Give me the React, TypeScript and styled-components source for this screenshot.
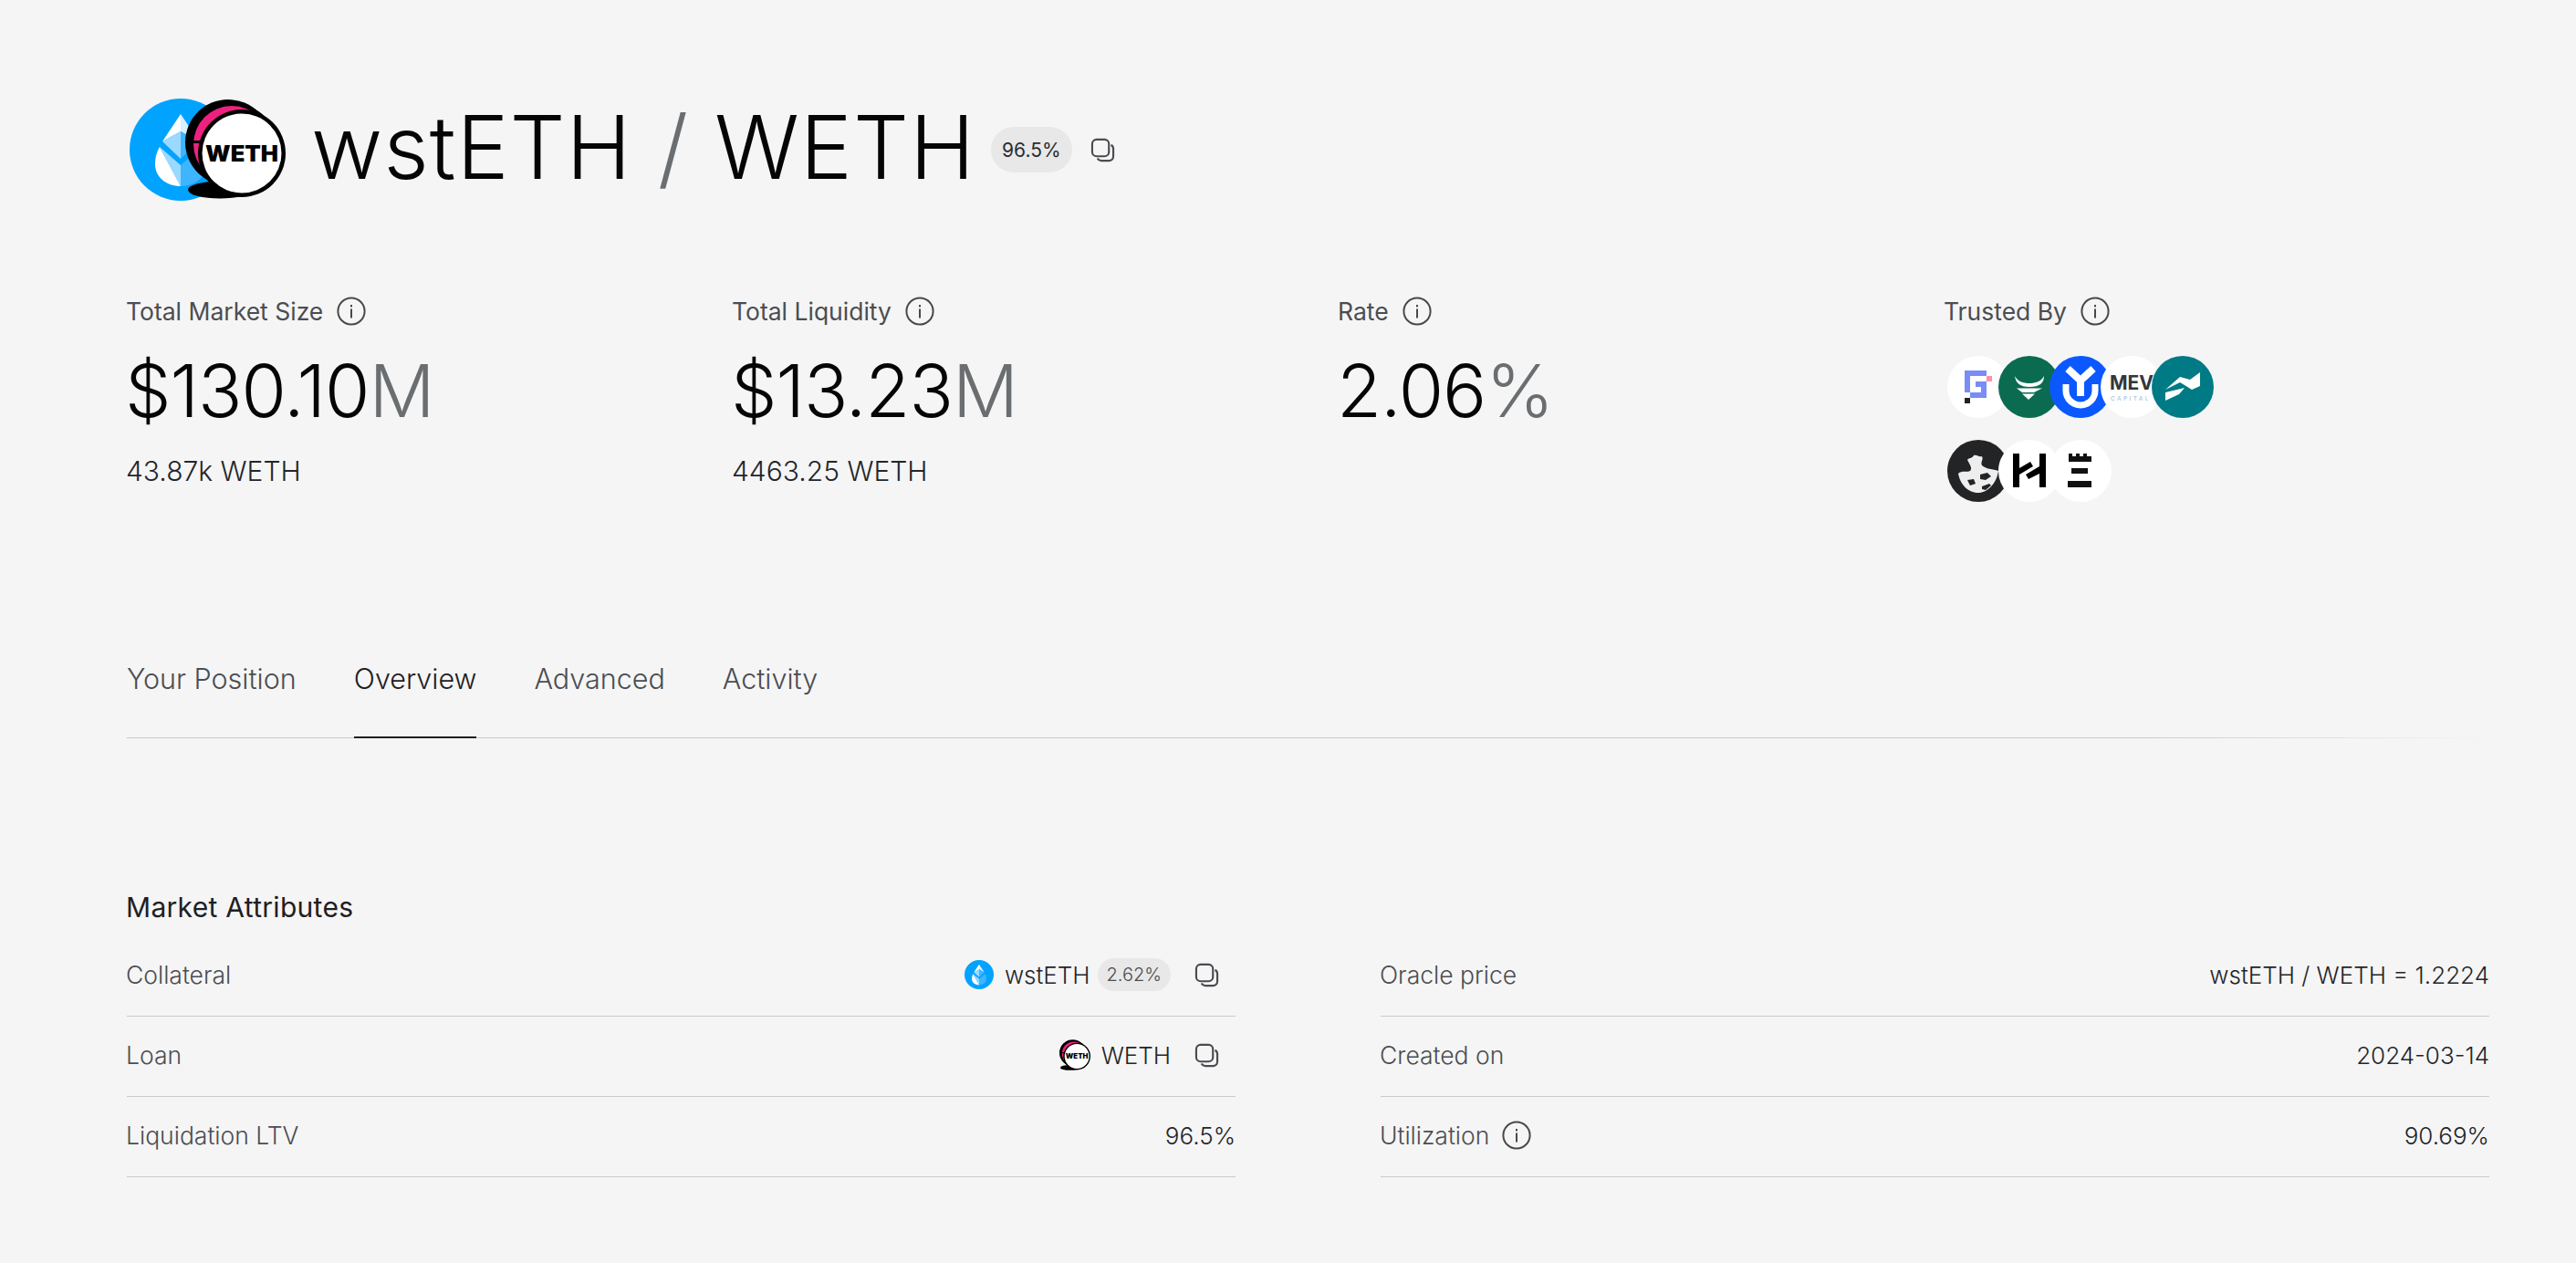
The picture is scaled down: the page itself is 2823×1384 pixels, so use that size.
import React from 'react';
import styled, { createGlobalStyle } from 'styled-components';

const GlobalStyle = createGlobalStyle`
  html, body {
    margin: 0;
    padding: 0;
    background: #f5f5f5;
  }
  body {
    font-family: Inter, "Liberation Sans", sans-serif;
    color: #151618;
  }
`;

const Page = styled.main`
  box-sizing: border-box;
  width: 2823px;
  height: 1384px;
  padding: 107px 95px 0 139px;
  overflow: hidden;
`;

const TitleRow = styled.header`
  display: flex;
  align-items: center;
  height: 114px;
`;

const LogoPair = styled.div`
  display: flex;
  width: 172px;
  margin-left: 3px;
  margin-right: 28px;
`;

const WethOverlap = styled.div`
  margin-left: -51px;
`;

const TokenSvg = styled.svg<{ $size: number }>`
  display: block;
  flex: none;
  width: ${({ $size }) => $size}px;
  height: ${({ $size }) => $size}px;
`;

const Title = styled.h1`
  margin: 0 0 6px -1px;
  font-size: 96px;
  font-weight: 300;
  letter-spacing: 1px;
  line-height: 108px;
  color: #050505;
  white-space: nowrap;
`;

const TitleSlash = styled.span`
  color: #6b6e70;
`;

const Chip = styled.span<{ $big?: boolean }>`
  display: inline-flex;
  align-items: center;
  justify-content: center;
  box-sizing: border-box;
  height: ${({ $big }) => ($big ? '50px' : '36px')};
  padding: 0 ${({ $big }) => ($big ? '12px' : '10px')};
  border-radius: 26px;
  background: #e8e8e8;
  font-size: ${({ $big }) => ($big ? '21px' : '20px')};
  color: ${({ $big }) => ($big ? '#2a2c30' : '#4b4d52')};
`;

const TitleChip = styled(Chip)`
  margin-left: 17px;
`;

const CopyButton = styled.button<{ $size: number }>`
  display: flex;
  border: 0;
  padding: 0;
  background: none;
  color: #4a4b4f;
  svg {
    display: block;
    width: ${({ $size }) => $size}px;
    height: ${({ $size }) => $size}px;
  }
`;

const TitleCopy = styled(CopyButton)`
  margin-left: 20px;
`;

const Stats = styled.section`
  display: grid;
  grid-template-columns: repeat(4, 664px);
  margin-top: 102px;
  height: 330px;
`;

const Stat = styled.div`
  display: flex;
  flex-direction: column;
`;

const StatLabel = styled.div`
  display: flex;
  align-items: center;
  gap: 15px;
  height: 36px;
  margin-left: -1px;
  font-size: 26.5px;
  color: #4b4d52;
`;

const StatValue = styled.div`
  margin-top: 29px;
  margin-left: -2px;
  height: 80px;
  font-size: 80px;
  font-weight: 300;
  line-height: 80px;
  letter-spacing: -1px;
  color: #050505;
`;

const StatUnit = styled.span`
  color: #6b6e70;
`;

const StatSub = styled.div`
  margin-top: 30px;
  margin-left: -1px;
  font-size: 30px;
  line-height: 36px;
  font-weight: 300;
  color: #23252a;
`;

const InfoIcon = styled.svg`
  display: block;
  flex: none;
  width: 32px;
  height: 32px;
  color: #47484c;
`;

const Curators = styled.div`
  display: flex;
  flex-direction: column;
  gap: 24px;
  margin-top: 31px;
  margin-left: 3px;
`;

const CuratorRow = styled.div`
  display: flex;
`;

const Curator = styled.svg`
  display: block;
  flex: none;
  width: 68px;
  height: 68px;
  margin-right: -12px;
`;

const Tabs = styled.nav`
  display: flex;
  gap: 63px;
  margin-top: 61px;
  height: 95px;
  box-sizing: border-box;
  border-bottom: 1px solid transparent;
  border-image: linear-gradient(to right, #cacaca 85%, #f5f5f5 100%) 1;
`;

const Tab = styled.a<{ $active?: boolean }>`
  font-size: 30.5px;
  line-height: 36px;
  padding-top: 12px;
  font-weight: 300;
  color: ${({ $active }) => ($active ? '#1e2023' : '#4b4d52')};
  box-sizing: border-box;
  height: 95px;
  border-bottom: ${({ $active }) => ($active ? '2px solid #1e2023' : '0')};
`;

const Attributes = styled.section`
  margin-top: 168px;
`;

const SectionTitle = styled.h2`
  margin: 0 0 0 -1px;
  font-size: 30px;
  font-weight: 400;
  letter-spacing: 0.3px;
  line-height: 34px;
  color: #1e2023;
`;

const AttributeGrid = styled.div`
  display: grid;
  grid-template-columns: 1215px 1215px;
  column-gap: 159px;
  margin-top: 15px;
`;

const Column = styled.div`
  display: flex;
  flex-direction: column;
`;

const Row = styled.div`
  display: flex;
  align-items: center;
  justify-content: space-between;
  box-sizing: border-box;
  height: 88px;
  padding-bottom: 3px;
  border-bottom: 1px solid #cacaca;
  font-size: 26px;
  font-weight: 350;
`;

const RowLabel = styled.span`
  display: flex;
  align-items: center;
  gap: 14px;
  margin-left: -1px;
  font-size: 26.5px;
  color: #4b4d52;
`;

const RowValue = styled.span`
  display: flex;
  align-items: center;
  color: #23252a;
`;

const TokenName = styled.span`
  margin-left: 12px;
`;

const RowChip = styled(Chip)`
  margin-left: 8px;
`;

const RowCopy = styled(CopyButton)`
  margin-left: 26px;
  margin-right: 18px;
`;

const Info = () => (
  <InfoIcon viewBox="0 0 32 32" fill="none">
    <circle cx="16" cy="16" r="14.6" stroke="currentColor" strokeWidth="2" />
    <rect x="15" y="13.5" width="2" height="10" fill="currentColor" />
    <rect x="15" y="9" width="2" height="2.4" fill="currentColor" />
  </InfoIcon>
);

const CopySvg = () => (
  <svg viewBox="0 0 28 28" fill="none" stroke="currentColor" strokeWidth="2.2">
    <rect x="2" y="2" width="19" height="19" rx="5" />
    <path d="M8 23.4c.9 1.6 2.4 2.6 4.4 2.6h8.6c2.8 0 5-2.2 5-5v-8.6c0-2-1-3.5-2.6-4.4" />
  </svg>
);

const WstEth = ({ size }: { size: number }) => (
  <TokenSvg $size={size} viewBox="0 0 112 112">
    <circle cx="56" cy="56" r="56" fill="#00a3ff" />
    <path d="M56 17 L36 47 L56 36 Z" fill="#ffffff" />
    <path d="M56 17 L76 47 L56 36 Z" fill="#d8f0ff" />
    <path d="M56 36 L36 47 L56 66 Z" fill="#9cd9ff" />
    <path d="M56 36 L76 47 L56 66 Z" fill="#3db5ff" />
    <path d="M33 53 L56 96 C40 96 28 86 28 72 C28 64 30 58 33 53 Z" fill="#ffffff" />
    <path d="M33 53 L56 73 L56 96 Z" fill="#9cd9ff" />
    <path d="M79 53 L56 73 L56 96 C72 96 84 86 84 72 C84 64 82 58 79 53 Z" fill="#3db5ff" />
  </TokenSvg>
);

const Weth = ({ size }: { size: number }) => (
  <TokenSvg $size={size} viewBox="0 0 110 110">
    <ellipse cx="38" cy="100" rx="35" ry="9.5" fill="#000" />
    <circle cx="47" cy="48" r="47" fill="#000" />
    <circle cx="54" cy="53" r="47" fill="#000" />
    <circle cx="51" cy="50" r="42" fill="#ee2180" />
    <rect x="3" y="46" width="14" height="3" fill="#000" />
    <circle cx="62" cy="60" r="48" fill="#000" />
    <circle cx="62" cy="60" r="43.5" fill="#fff" />
    <text
      x="62"
      y="69"
      textAnchor="middle"
      fontFamily="Inter, sans-serif"
      fontWeight="900"
      fontSize="24"
      textLength="80"
      lengthAdjust="spacingAndGlyphs"
      fill="#000"
    >
      WETH
    </text>
  </TokenSvg>
);

const Curator1 = () => (
  <Curator viewBox="0 0 68 68">
    <circle cx="34" cy="34" r="34" fill="#fff" />
    <path d="M19 16 H43 V22 H25 V40 H19 Z M31 28 H43 V46 H25 V40 H37 V34 H31 Z" fill="#7a8cf5" />
    <rect x="43" y="22" width="6" height="6" fill="#ff8fab" />
    <rect x="19" y="46" width="6" height="6" fill="#222" />
  </Curator>
);

const Curator2 = () => (
  <Curator viewBox="0 0 68 68">
    <circle cx="34" cy="34" r="34" fill="#0b6b50" />
    <path d="M18 22 C21 28 27 30 34 30 C41 30 47 28 50 22 C50 30 45 34 34 34 C24 34 19 30 18 22 Z" fill="#fff" />
    <path d="M20 35.5 L48 35.5 L39 40 L26 40 Z" fill="#fff" />
    <path d="M26 41.5 L40 41.5 L33 48 Z" fill="#fff" />
  </Curator>
);

const Curator3 = () => (
  <Curator viewBox="0 0 68 68">
    <circle cx="34" cy="34" r="34" fill="#0b58ff" />
    <path d="M20 14 L34 27 L48 14" fill="none" stroke="#fff" strokeWidth="8" />
    <path d="M34 25 V44" stroke="#fff" strokeWidth="8" />
    <path d="M18 31 V38 A16 16 0 0 0 50 38 V31" fill="none" stroke="#fff" strokeWidth="7" />
  </Curator>
);

const Curator4 = () => (
  <Curator viewBox="0 0 68 68">
    <circle cx="34" cy="34" r="34" fill="#fff" />
    <text x="10" y="37" fontFamily="Inter, sans-serif" fontWeight="700" fontSize="21" fill="#33363a">
      MEV
    </text>
    <text x="11" y="49" fontFamily="Inter, sans-serif" fontWeight="500" fontSize="6.5" letterSpacing="2.4" fill="#a8c6d8">
      CAPITAL
    </text>
  </Curator>
);

const Curator5 = () => (
  <Curator viewBox="0 0 68 68">
    <circle cx="34" cy="34" r="34" fill="#007a85" />
    <path d="M15 37 L31 23 L42 26 L53 18 V33 L44 37 L36 32 L31 29 Z" fill="#fff" />
    <path d="M15 40 L36 35 L30 42 L15 49 Z" fill="#fff" />
  </Curator>
);

const Curator6 = () => (
  <Curator viewBox="0 0 68 68">
    <circle cx="34" cy="34" r="34" fill="#232425" />
    <path d="M12 37 C16 33 21 36 25 34 C28 31 24 26 22 22 C24 19 27 21 29 17 C33 16 34 19 38 18 C40 22 36 24 38 28 C42 32 50 32 56 34 C54 48 44 58 34 58 C22 58 14 48 12 37 Z" fill="#eee" />
    <path d="M36 38 L44 36 L48 40 L42 44 L36 43 Z M22 44 L29 43 L31 48 L25 50 Z M38 51 L46 48 L48 50 L42 55 L38 54 Z" fill="#232425" />
  </Curator>
);

const Curator7 = () => (
  <Curator viewBox="0 0 68 68">
    <circle cx="34" cy="34" r="34" fill="#fff" />
    <path d="M16 15 h7 v16 l12 -7 l3 5 l-15 9 v14 h-7 z" fill="#000" />
    <path d="M45 15 h7 v37 h-7 v-15 l-12 6 l-3 -5 l15 -9 z" fill="#000" />
  </Curator>
);

const Curator8 = () => (
  <Curator viewBox="0 0 68 68">
    <circle cx="34" cy="34" r="34" fill="#fff" />
    <path d="M21 15 h4 v3 h4 v-3 h4 v3 h4 v-3 h4 v3 h5 v-3 h0 v9 h-25 z" fill="#111" />
    <rect x="24" y="31" width="18" height="6" fill="#111" />
    <rect x="20" y="45" width="26" height="7" fill="#111" />
  </Curator>
);

const App = () => (
  <>
    <GlobalStyle />
    <Page>
      <TitleRow>
        <LogoPair>
          <WstEth size={112} />
          <WethOverlap>
            <Weth size={110} />
          </WethOverlap>
        </LogoPair>
        <Title>
          wstETH <TitleSlash>/</TitleSlash> WETH
        </Title>
        <TitleChip $big>96.5%</TitleChip>
        <TitleCopy $size={27}>
          <CopySvg />
        </TitleCopy>
      </TitleRow>

      <Stats>
        <Stat>
          <StatLabel>
            Total Market Size <Info />
          </StatLabel>
          <StatValue>
            $130.10<StatUnit>M</StatUnit>
          </StatValue>
          <StatSub>43.87k WETH</StatSub>
        </Stat>
        <Stat>
          <StatLabel>
            Total Liquidity <Info />
          </StatLabel>
          <StatValue>
            $13.23<StatUnit>M</StatUnit>
          </StatValue>
          <StatSub>4463.25 WETH</StatSub>
        </Stat>
        <Stat>
          <StatLabel>
            Rate <Info />
          </StatLabel>
          <StatValue>
            2.06<StatUnit>%</StatUnit>
          </StatValue>
        </Stat>
        <Stat>
          <StatLabel>
            Trusted By <Info />
          </StatLabel>
          <Curators>
            <CuratorRow>
              <Curator1 />
              <Curator2 />
              <Curator3 />
              <Curator4 />
              <Curator5 />
            </CuratorRow>
            <CuratorRow>
              <Curator6 />
              <Curator7 />
              <Curator8 />
            </CuratorRow>
          </Curators>
        </Stat>
      </Stats>

      <Tabs>
        <Tab>Your Position</Tab>
        <Tab $active>Overview</Tab>
        <Tab>Advanced</Tab>
        <Tab>Activity</Tab>
      </Tabs>

      <Attributes>
        <SectionTitle>Market Attributes</SectionTitle>
        <AttributeGrid>
          <Column>
            <Row>
              <RowLabel>Collateral</RowLabel>
              <RowValue>
                <WstEth size={32} />
                <TokenName>wstETH</TokenName>
                <RowChip>2.62%</RowChip>
                <RowCopy $size={27}>
                  <CopySvg />
                </RowCopy>
              </RowValue>
            </Row>
            <Row>
              <RowLabel>Loan</RowLabel>
              <RowValue>
                <Weth size={34} />
                <TokenName>WETH</TokenName>
                <RowCopy $size={27}>
                  <CopySvg />
                </RowCopy>
              </RowValue>
            </Row>
            <Row>
              <RowLabel>Liquidation LTV</RowLabel>
              <RowValue>96.5%</RowValue>
            </Row>
          </Column>
          <Column>
            <Row>
              <RowLabel>Oracle price</RowLabel>
              <RowValue>wstETH / WETH = 1.2224</RowValue>
            </Row>
            <Row>
              <RowLabel>Created on</RowLabel>
              <RowValue>2024-03-14</RowValue>
            </Row>
            <Row>
              <RowLabel>
                Utilization <Info />
              </RowLabel>
              <RowValue>90.69%</RowValue>
            </Row>
          </Column>
        </AttributeGrid>
      </Attributes>
    </Page>
  </>
);

export default App;
